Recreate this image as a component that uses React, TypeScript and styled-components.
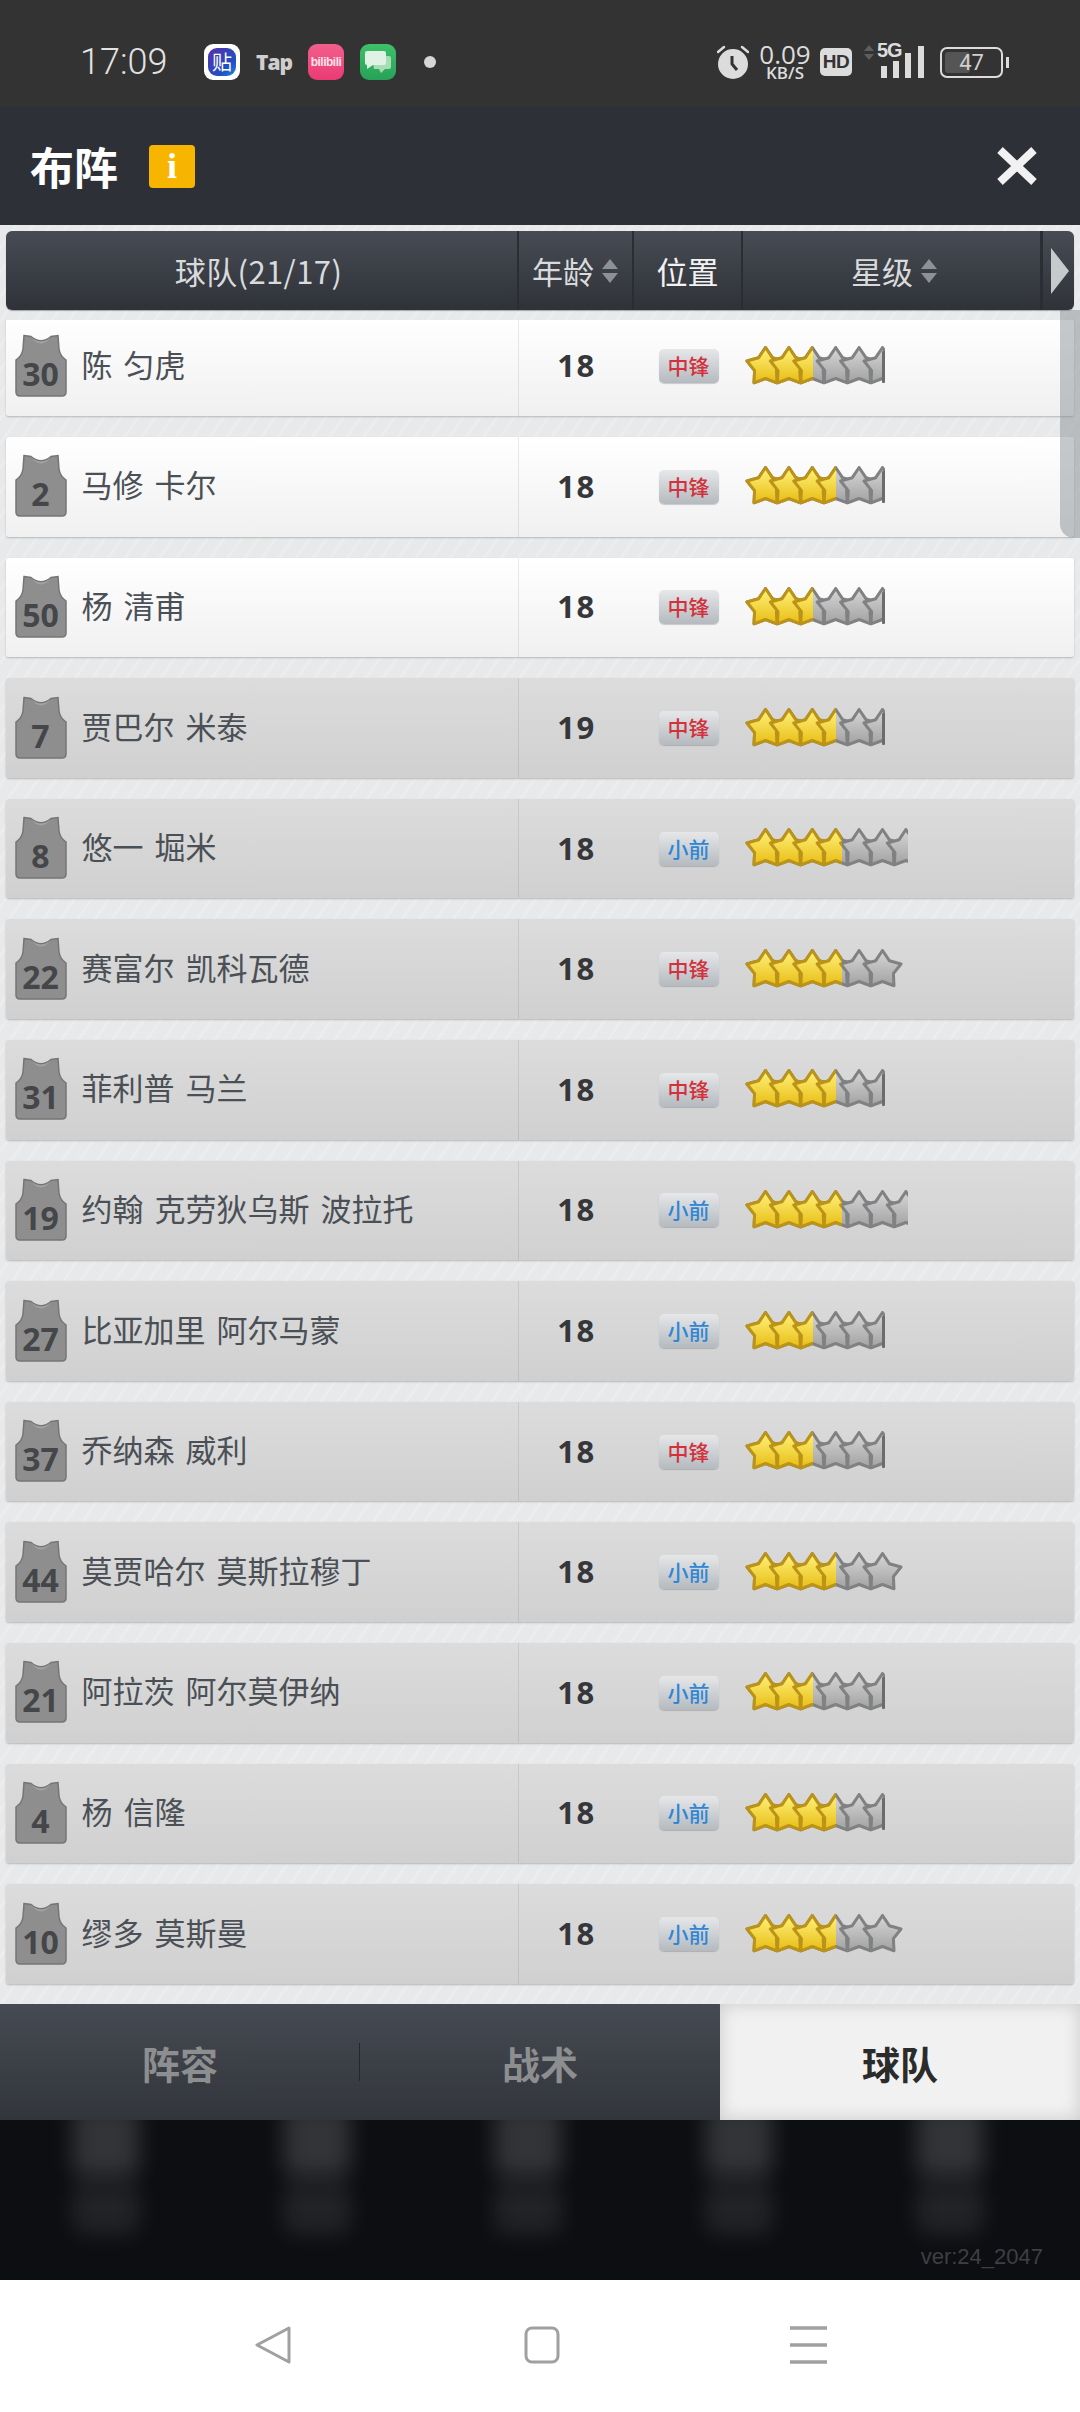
import React from "react"
import styled, { createGlobalStyle } from "styled-components"

const CJK = `"Noto Sans CJK SC", "Noto Sans", sans-serif`

type Player = {
  no: number
  name: string
  age: number
  pos: "中锋" | "小前"
  gold: number
  clip: number
  count: number
}

const players: Player[] = [
  { no: 30, name: "陈 匀虎", age: 18, pos: "中锋", gold: 68, clip: 140, count: 6 },
  { no: 2, name: "马修 卡尔", age: 18, pos: "中锋", gold: 91, clip: 140, count: 6 },
  { no: 50, name: "杨 清甫", age: 18, pos: "中锋", gold: 68, clip: 140, count: 6 },
  { no: 7, name: "贾巴尔 米泰", age: 19, pos: "中锋", gold: 91, clip: 140, count: 6 },
  { no: 8, name: "悠一 堀米", age: 18, pos: "小前", gold: 97, clip: 163, count: 7 },
  { no: 22, name: "赛富尔 凯科瓦德", age: 18, pos: "中锋", gold: 97, clip: 158, count: 6 },
  { no: 31, name: "菲利普 马兰", age: 18, pos: "中锋", gold: 91, clip: 140, count: 6 },
  { no: 19, name: "约翰 克劳狄乌斯 波拉托", age: 18, pos: "小前", gold: 97, clip: 163, count: 7 },
  { no: 27, name: "比亚加里 阿尔马蒙", age: 18, pos: "小前", gold: 68, clip: 140, count: 6 },
  { no: 37, name: "乔纳森 威利", age: 18, pos: "中锋", gold: 68, clip: 140, count: 6 },
  { no: 44, name: "莫贾哈尔 莫斯拉穆丁", age: 18, pos: "小前", gold: 91, clip: 158, count: 6 },
  { no: 21, name: "阿拉茨 阿尔莫伊纳", age: 18, pos: "小前", gold: 68, clip: 140, count: 6 },
  { no: 4, name: "杨 信隆", age: 18, pos: "小前", gold: 91, clip: 140, count: 6 },
  { no: 10, name: "缪多 莫斯曼", age: 18, pos: "小前", gold: 91, clip: 158, count: 6 },
]

const STAR_POINTS = Array.from({ length: 10 }, (_, i) => {
  const r = i % 2 === 0 ? 19.5 : 11.5
  const a = -Math.PI / 2 + (i * Math.PI) / 5
  return `${(20.5 + r * Math.cos(a)).toFixed(1)},${(22 + r * Math.sin(a)).toFixed(1)}`
}).join(" ")

const GlobalStyle = createGlobalStyle`
  html, body {
    margin: 0;
    padding: 0;
    background: #fff;
  }
  * {
    box-sizing: border-box;
  }
`

const Screen = styled.div`
  width: 1080px;
  height: 2412px;
  display: flex;
  flex-direction: column;
  overflow: hidden;
  font-family: ${CJK};
`

const StatusBar = styled.div`
  height: 107px;
  flex: none;
  background: #333333;
  display: flex;
  align-items: center;
  justify-content: space-between;
  padding: 17px 73px 0 80px;
  color: #dcdcdc;
`

const StatusGroup = styled.div`
  display: flex;
  align-items: center;
`

const Clock = styled.span`
  font-family: Roboto, sans-serif;
  font-size: 36px;
  font-weight: 300;
  width: 124px;
  color: #e2e2e2;
`

const AppIcon = styled.div<{ $bg: string }>`
  position: relative;
  width: 36px;
  height: 36px;
  border-radius: 9px;
  background: ${(p) => p.$bg};
  margin-right: 16px;
  display: flex;
  align-items: center;
  justify-content: center;
  overflow: hidden;
`

const TieBadge = styled.span`
  width: 28px;
  height: 28px;
  border-radius: 9px;
  background: linear-gradient(135deg, #5a2fa8, #1f50c4 70%, #1d8ee0);
  color: #fff;
  font-size: 20px;
  line-height: 28px;
  text-align: center;
`

const TapLabel = styled.span`
  width: 36px;
  margin-right: 16px;
  font-family: "Open Sans", sans-serif;
  font-size: 21px;
  font-weight: 800;
  letter-spacing: -1px;
  color: #cfcfcf;
`

const BiliLabel = styled.span`
  font-family: "Liberation Sans", sans-serif;
  font-size: 12px;
  font-weight: 700;
  letter-spacing: -0.5px;
  color: #ffe3ec;
`

const Dot = styled.span`
  width: 12px;
  height: 12px;
  border-radius: 50%;
  background: #d6d6d6;
  margin-left: 12px;
`

const Speed = styled.div`
  width: 52px;
  margin: 0 9px 0 10px;
  display: flex;
  flex-direction: column;
  align-items: center;
  font-family: "Open Sans", sans-serif;
  color: #dcdcdc;
`

const SpeedValue = styled.span`
  font-size: 26px;
  line-height: 22px;
`

const SpeedUnit = styled.span`
  font-size: 17px;
  font-weight: 600;
  line-height: 16px;
  white-space: nowrap;
`

const HdBadge = styled.span`
  width: 32px;
  height: 28px;
  border-radius: 5px;
  background: #dcdcdc;
  color: #333;
  font-family: "Liberation Sans", sans-serif;
  font-size: 19px;
  font-weight: 700;
  line-height: 28px;
  text-align: center;
  letter-spacing: -0.5px;
`

const Signal = styled.div`
  position: relative;
  width: 62px;
  height: 34px;
  margin: 0 14px 0 12px;
`

const FiveG = styled.span`
  position: absolute;
  left: 13px;
  top: -6px;
  font-family: "Liberation Sans", sans-serif;
  font-size: 20px;
  font-weight: 700;
  letter-spacing: -1px;
`

const Battery = styled.div`
  position: relative;
  width: 63px;
  height: 31px;
  border: 2px solid #dcdcdc;
  border-radius: 7px;
  padding: 3px;
  margin-right: 4px;
`

const BatteryFill = styled.div`
  height: 100%;
  width: 47%;
  min-width: 47%;
  background: #555;
  border-radius: 3px;
`

const BatteryLabel = styled.span`
  position: absolute;
  inset: 0;
  text-align: center;
  font-family: Roboto, sans-serif;
  font-size: 22px;
  line-height: 27px;
  color: #cfcfcf;
`

const BatteryCap = styled.span`
  position: absolute;
  right: -8px;
  top: 8px;
  width: 3px;
  height: 11px;
  background: #dcdcdc;
`

const Header = styled.div`
  height: 118px;
  flex: none;
  background: #2d3037;
  display: flex;
  align-items: center;
  padding: 0 42px 0 30px;
`

const Title = styled.h1`
  margin: 0 31px 0 0;
  font-size: 44px;
  font-weight: 700;
  line-height: 1;
  color: #fff;
`

const InfoBadge = styled.span`
  width: 46px;
  height: 43px;
  border-radius: 4px;
  background: #f7b500;
  color: #fff;
  font-family: "Liberation Serif", serif;
  font-size: 36px;
  font-weight: 700;
  line-height: 43px;
  text-align: center;
`

const CloseButton = styled.div`
  margin-left: auto;
  width: 42px;
  height: 38px;
  display: flex;
`

const Board = styled.div`
  position: relative;
  flex: 1;
  min-height: 0;
  display: flex;
  flex-direction: column;
  padding-top: 6px;
  background-color: #e7e9eb;
  background-image: repeating-linear-gradient(
    -55deg,
    rgba(255, 255, 255, 0.16) 0 3px,
    transparent 3px 14px
  );
`

const TableHead = styled.div`
  height: 79px;
  flex: none;
  margin: 0 6px;
  display: grid;
  grid-template-columns: 513px 115px 109px 300px 1fr;
  border-radius: 6px;
  background: linear-gradient(#474b53, #2f3239);
  box-shadow: 0 1px 1px rgba(0, 0, 0, 0.3);
  color: #d9dadc;
  font-size: 31px;
`

const HeadCell = styled.div<{ $pad?: number; $padRight?: number; $bright?: boolean }>`
  display: flex;
  align-items: center;
  justify-content: center;
  gap: 7px;
  padding-left: ${(p) => p.$pad ?? 0}px;
  padding-right: ${(p) => p.$padRight ?? 0}px;
  border-right: 2px solid #2a2d33;
  color: ${(p) => (p.$bright ? "#f2f2f2" : "inherit")};

  &:last-child {
    border-right: 0;
    border-left: 3px solid #2a2d33;
    padding-left: 3px;
    margin-left: -3px;
  }
`

const HeadTitle = styled.span`
  letter-spacing: 0.4px;
`

const List = styled.div`
  flex: 1;
  min-height: 0;
  margin-top: 10px;
  overflow: hidden;
  padding: 0 6px;
  display: flex;
  flex-direction: column;
  gap: 21px;

  & > :first-child {
    margin-top: -3.5px;
  }
`

const ScrollThumb = styled.div`
  position: absolute;
  right: 0;
  top: 85px;
  width: 20px;
  height: 228px;
  border-bottom-left-radius: 14px;
  background: rgba(120, 126, 132, 0.42);
`

const Row = styled.div<{ $dim: boolean }>`
  height: 99.6px;
  flex: none;
  display: grid;
  grid-template-columns: 513px 115px 109px 1fr;
  border-radius: 3px;
  background: ${(p) =>
    p.$dim ? "linear-gradient(#dcdcdc, #d0d0d0)" : "linear-gradient(#ffffff, #f0f0f0)"};
  box-shadow: 0 1px 2px rgba(0, 0, 0, 0.22);
`

const NameCell = styled.div`
  display: flex;
  align-items: center;
  gap: 15px;
  padding-left: 8.5px;
  border-right: 1px solid rgba(0, 0, 0, 0.08);
  font-size: 31px;
  word-spacing: 4px;
  color: #4b5056;
`

const NameText = styled.span`
  margin-top: -6px;
`

const Jersey = styled.div`
  position: relative;
  width: 52px;
  height: 63px;
  flex: none;
  margin-top: -2px;
`

const JerseyNo = styled.span`
  position: absolute;
  left: 0;
  right: 0;
  bottom: 5px;
  text-align: center;
  font-family: "Open Sans", sans-serif;
  font-size: 32px;
  font-weight: 700;
  line-height: 36px;
  color: #444649;
`

const AgeCell = styled.div`
  display: flex;
  align-items: center;
  justify-content: center;
  padding-bottom: 2px;
  font-family: "Open Sans", sans-serif;
  font-size: 31px;
  font-weight: 700;
  letter-spacing: 1.5px;
  color: #35373a;
`

const PosCell = styled.div`
  display: flex;
  align-items: center;
  justify-content: center;
`

const PosBadge = styled.span<{ $color: string }>`
  width: 60px;
  height: 34px;
  border-radius: 5px;
  background: linear-gradient(#e6e7e9, #b4babf);
  box-shadow: 0 1px 1px rgba(0, 0, 0, 0.18);
  color: ${(p) => p.$color};
  font-size: 21px;
  font-weight: 500;
  line-height: 33px;
  text-align: center;
`

const StarCell = styled.div`
  display: flex;
  align-items: center;
  padding: 1px 0 0 2px;

  & > svg {
    filter: blur(0.5px);
  }
`

const TabBar = styled.div`
  height: 116px;
  flex: none;
  display: grid;
  grid-template-columns: repeat(3, 1fr);
  background: linear-gradient(#464a52, #32353c);
`

const Tab = styled.div<{ $active?: boolean; $split?: boolean }>`
  position: relative;
  display: flex;
  align-items: center;
  justify-content: center;
  font-size: 38px;
  font-weight: 700;
  color: ${(p) => (p.$active ? "#2b2b2b" : "#8d8e90")};
  background: ${(p) => (p.$active ? "#f1f1f1" : "transparent")};
  box-shadow: ${(p) => (p.$active ? "inset 0 0 18px rgba(0,0,0,0.16)" : "none")};

  ${(p) =>
    p.$split &&
    `&::after {
      content: "";
      position: absolute;
      right: 0;
      top: 39px;
      height: 38px;
      width: 1px;
      background: #25272c;
    }`}
`

const Backdrop = styled.div`
  position: relative;
  height: 160px;
  flex: none;
  overflow: hidden;
  background: #0c0e11;
  display: grid;
  grid-template-columns: repeat(5, 66px);
  grid-template-rows: 56px 50px;
  column-gap: 145px;
  row-gap: 8px;
  padding-left: 73px;
`

const Blur = styled.div<{ $top?: boolean }>`
  background: rgba(255, 255, 255, ${(p) => (p.$top ? 0.16 : 0.09)});
  border-radius: 6px;
  filter: blur(11px);
  margin-top: ${(p) => (p.$top ? -14 : 0)}px;
`

const Version = styled.span`
  position: absolute;
  right: 37px;
  bottom: 10px;
  font-family: "Liberation Sans", sans-serif;
  font-size: 22px;
  color: #3d3f43;
`

const NavBar = styled.div`
  height: 132px;
  flex: none;
  background: #ffffff;
  display: flex;
  align-items: flex-start;
  padding: 46px 0 0 254px;
  gap: 230px;
`

const SortArrows = () => (
  <svg width="18" height="26" viewBox="0 0 18 26">
    <path d="M9 1 L17 11 H1 Z" fill="#8d9097" />
    <path d="M9 25 L17 15 H1 Z" fill="#8d9097" />
  </svg>
)

const Stars = ({ gold, clip, count, id }: { gold: number; clip: number; count: number; id: number }) => {
  const row = Array.from({ length: count }, (_, i) => i)
  const draw = (fill: string, stroke: string) =>
    row.map((i) => (
      <g key={i} transform={`translate(${i * 23.4} 0)`}>
        <polygon points={STAR_POINTS} fill={fill} stroke={stroke} strokeWidth="3" strokeLinejoin="round" />
      </g>
    ))
  return (
    <svg width={clip} height="44" viewBox={`0 0 ${clip} 44`}>
      <defs>
        <linearGradient id={`gold${id}`} x1="0" y1="0" x2="0" y2="1">
          <stop offset="0" stopColor="#fff27c" />
          <stop offset="1" stopColor="#e8bd14" />
        </linearGradient>
        <linearGradient id={`grey${id}`} x1="0" y1="0" x2="0" y2="1">
          <stop offset="0" stopColor="#d6d6d6" />
          <stop offset="1" stopColor="#a2a2a2" />
        </linearGradient>
      </defs>
      {draw(`url(#grey${id})`, "#808183")}
      {clip < 150 && <rect x={clip - 3} y="6" width="3" height="32" rx="1" fill="#6b6c6e" />}
      <svg x="0" y="0" width={gold} height="44">
        {draw(`url(#gold${id})`, "#bb9318")}
      </svg>
    </svg>
  )
}

const JerseyShape = () => (
  <svg width="52" height="63" viewBox="0 0 52 63">
    <path
      d="M9 1.5 L16 2.5 Q26 11 36 2.5 L43 1.5 L44 15 Q45 22 51 26 L51 58 Q51 62 47 62 L5 62 Q1 62 1 58 L1 26 Q7 22 8 15 Z"
      fill="#8e8e8e"
      stroke="#757575"
      strokeWidth="1.5"
    />
    <path d="M16 3 Q26 12 36 3 Q26 16 16 3 Z" fill="#a3a3a3" />
  </svg>
)

const App = () => {
  return (
    <Screen>
      <GlobalStyle />
      <StatusBar>
        <StatusGroup>
          <Clock>17:09</Clock>
          <AppIcon $bg="#ffffff">
            <TieBadge>贴</TieBadge>
          </AppIcon>
          <TapLabel>Tap</TapLabel>
          <AppIcon $bg="linear-gradient(#f2608c, #ea3a74)">
            <BiliLabel>bilibili</BiliLabel>
          </AppIcon>
          <AppIcon $bg="linear-gradient(#3fc06a, #27a258)">
            <svg width="28" height="24" viewBox="0 0 28 24">
              <path d="M8 6 H25 Q27 6 27 8 V17 Q27 19 25 19 H21 L17 23 L15 19 H10 Z" fill="#a8dcb6" />
              <path d="M3 1 H20 Q22 1 22 3 V13 Q22 15 20 15 H9 L3 19 V15 Q1 15 1 13 V3 Q1 1 3 1 Z" fill="#dff2e4" />
            </svg>
          </AppIcon>
          <Dot />
        </StatusGroup>
        <StatusGroup>
          <svg width="32" height="36" viewBox="0 0 32 36">
            <circle cx="16" cy="20" r="15" fill="#dcdcdc" />
            <path d="M15 12 V20 L20 26" fill="none" stroke="#333" strokeWidth="3" />
            <path d="M1 8 L7 3 M31 8 L25 3" stroke="#dcdcdc" strokeWidth="2.5" strokeLinecap="round" />
          </svg>
          <Speed>
            <SpeedValue>0.09</SpeedValue>
            <SpeedUnit>KB/S</SpeedUnit>
          </Speed>
          <HdBadge>HD</HdBadge>
          <Signal>
            <svg width="62" height="34" viewBox="0 0 62 34">
              <path d="M5 0 L10 6 H0 Z M5 15 L10 9 H0 Z" fill="#5e5e5e" />
              <rect x="17" y="21" width="6" height="12" fill="#dcdcdc" />
              <rect x="29" y="16" width="6" height="17" fill="#dcdcdc" />
              <rect x="41" y="8" width="6" height="25" fill="#dcdcdc" />
              <rect x="54" y="1" width="6" height="32" fill="#dcdcdc" />
            </svg>
            <FiveG>5G</FiveG>
          </Signal>
          <Battery>
            <BatteryFill />
            <BatteryLabel>47</BatteryLabel>
            <BatteryCap />
          </Battery>
        </StatusGroup>
      </StatusBar>

      <Header>
        <Title>布阵</Title>
        <InfoBadge>i</InfoBadge>
        <CloseButton>
          <svg width="42" height="38" viewBox="0 0 42 38">
            <path d="M4 3 L38 35 M38 3 L4 35" stroke="#f1f1f1" strokeWidth="8" />
          </svg>
        </CloseButton>
      </Header>

      <Board>
        <TableHead>
          <HeadCell $padRight={6}>
            <HeadTitle>球队(21/17)</HeadTitle>
          </HeadCell>
          <HeadCell>
            年龄
            <SortArrows />
          </HeadCell>
          <HeadCell $bright>位置</HeadCell>
          <HeadCell $pad={5}>
            星级
            <SortArrows />
          </HeadCell>
          <HeadCell>
            <svg width="20" height="46" viewBox="0 0 20 46">
              <path d="M1 0 L19 23 L1 46 Z" fill="#c6cacd" />
            </svg>
          </HeadCell>
        </TableHead>
        <List>
          {players.map((p, i) => (
            <Row key={p.no} $dim={i > 2}>
              <NameCell>
                <Jersey>
                  <JerseyShape />
                  <JerseyNo>{p.no}</JerseyNo>
                </Jersey>
                <NameText>{p.name}</NameText>
              </NameCell>
              <AgeCell>{p.age}</AgeCell>
              <PosCell>
                <PosBadge $color={p.pos === "中锋" ? "#d2323c" : "#2f86d4"}>{p.pos}</PosBadge>
              </PosCell>
              <StarCell>
                <Stars gold={p.gold} clip={p.clip} count={p.count} id={i} />
              </StarCell>
            </Row>
          ))}
        </List>
        <ScrollThumb />
      </Board>

      <TabBar>
        <Tab $split>阵容</Tab>
        <Tab>战术</Tab>
        <Tab $active>球队</Tab>
      </TabBar>

      <Backdrop>
        {[0, 1, 2, 3, 4].map((i) => (
          <Blur key={`t${i}`} $top />
        ))}
        {[0, 1, 2, 3, 4].map((i) => (
          <Blur key={`b${i}`} />
        ))}
        <Version>ver:24_2047</Version>
      </Backdrop>

      <NavBar>
        <svg width="40" height="38" viewBox="0 0 40 38">
          <path d="M35 2 L3 19 L35 36 Z" fill="none" stroke="#a0a0a0" strokeWidth="3" strokeLinejoin="round" />
        </svg>
        <svg width="36" height="38" viewBox="0 0 36 38">
          <rect x="2" y="2" width="32" height="34" rx="6" fill="none" stroke="#a0a0a0" strokeWidth="3" />
        </svg>
        <svg width="37" height="38" viewBox="0 0 37 38">
          <path d="M0 2 H37 M0 19 H37 M0 36 H37" stroke="#a0a0a0" strokeWidth="3.5" />
        </svg>
      </NavBar>
    </Screen>
  )
}

export default App
